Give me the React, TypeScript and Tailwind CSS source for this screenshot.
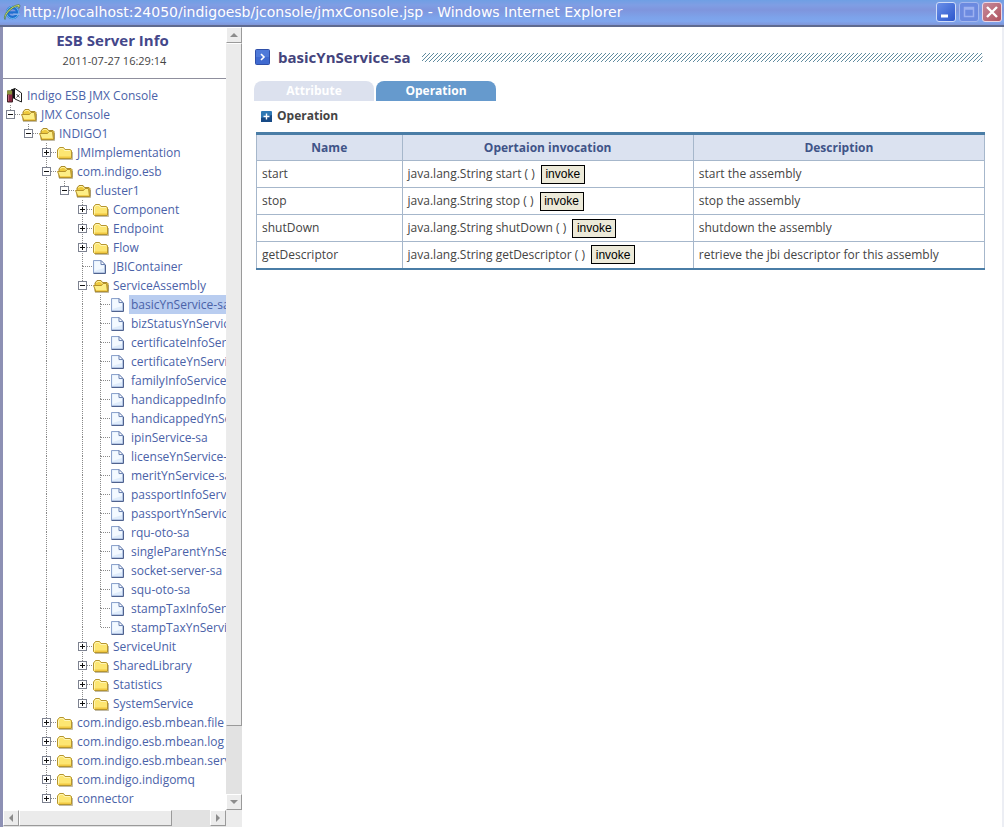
// App.tsx — Indigo ESB JMX console window: MBean tree on the left, operation table on the right

import type { ReactNode } from 'react';

interface TreeItem {
  label: string;
  kind: 'open' | 'closed' | 'page';
  selected?: boolean;
  children?: TreeItem[];
}

const closed = (label: string): TreeItem => ({ label, kind: 'closed' });
const page = (label: string): TreeItem => ({ label, kind: 'page' });

const TREE: TreeItem = {
  label: 'JMX Console',
  kind: 'open',
  children: [
    {
      label: 'INDIGO1',
      kind: 'open',
      children: [
        closed('JMImplementation'),
        {
          label: 'com.indigo.esb',
          kind: 'open',
          children: [
            {
              label: 'cluster1',
              kind: 'open',
              children: [
                closed('Component'),
                closed('Endpoint'),
                closed('Flow'),
                page('JBIContainer'),
                {
                  label: 'ServiceAssembly',
                  kind: 'open',
                  children: [
                    { label: 'basicYnService-sa', kind: 'page', selected: true },
                    page('bizStatusYnService-sa'),
                    page('certificateInfoService-sa'),
                    page('certificateYnService-sa'),
                    page('familyInfoService-sa'),
                    page('handicappedInfoService-sa'),
                    page('handicappedYnService-sa'),
                    page('ipinService-sa'),
                    page('licenseYnService-sa'),
                    page('meritYnService-sa'),
                    page('passportInfoService-sa'),
                    page('passportYnService-sa'),
                    page('rqu-oto-sa'),
                    page('singleParentYnService-sa'),
                    page('socket-server-sa'),
                    page('squ-oto-sa'),
                    page('stampTaxInfoService-sa'),
                    page('stampTaxYnService-sa'),
                  ],
                },
                closed('ServiceUnit'),
                closed('SharedLibrary'),
                closed('Statistics'),
                closed('SystemService'),
              ],
            },
          ],
        },
        closed('com.indigo.esb.mbean.file'),
        closed('com.indigo.esb.mbean.log'),
        closed('com.indigo.esb.mbean.service'),
        closed('com.indigo.indigomq'),
        closed('connector'),
      ],
    },
  ],
};

const OPERATIONS = [
  { name: 'start', description: 'start the assembly' },
  { name: 'stop', description: 'stop the assembly' },
  { name: 'shutDown', description: 'shutdown the assembly' },
  { name: 'getDescriptor', description: 'retrieve the jbi descriptor for this assembly' },
];

/** One 18px column of the tree: a guide line, a branch, or a branch with its expander box */
function TreeCell({ up, down, branch, box }: { up?: boolean; down?: boolean; branch?: boolean; box?: '+' | '-' }) {
  return (
    <svg width="18" height="19" viewBox="0 0 18 19" className="shrink-0" aria-hidden="true">
      <g stroke="#8a8a8a" strokeDasharray="1 1" shapeRendering="crispEdges">
        {up && <path d="M7.5 0V9" />}
        {down && <path d="M7.5 9V19" />}
        {branch && <path d="M8 9.5H18" />}
      </g>
      {box && (
        <g shapeRendering="crispEdges">
          <rect x="3.5" y="5.5" width="8" height="8" fill="#fff" stroke="#7d8290" />
          <path d={box === '+' ? 'M5 9.5H10M7.5 7V12' : 'M5 9.5H10'} stroke="#111" />
        </g>
      )}
    </svg>
  );
}

function FolderIcon({ open }: { open: boolean }) {
  return (
    <svg width="17" height="16" viewBox="0 0 17 16" className="shrink-0" aria-hidden="true">
      {open ? (
        <>
          <path d="M2 13.5V5L4 2.5H8L9.5 4.5H14L15 5.5V13.5Z" fill="#eec93c" stroke="#a98a2c" />
          <path d="M3.5 5L4.5 3.5H7.5L9 5.5H13.5" fill="none" stroke="#fff3a0" />
          <path d="M0.5 7.5H8.5L10 5.5H13.5L14.5 13.5H3Z" fill="#fdee86" stroke="#b5922c" />
          <path d="M3 12.5H14" stroke="#f3cf4e" />
        </>
      ) : (
        <>
          <path d="M0.5 12.5V5L2.5 2.5H6.5L8 4.5H13L14.5 5.5V13.5H1.5Z" fill="#fde672" stroke="#b5952f" />
          <path d="M1.5 11.5V5.5L3 3.5H6L7.5 5.5H13" fill="none" stroke="#fff6b4" />
          <path d="M2 11.5H14V13H2Z" fill="#f1c842" />
        </>
      )}
      <path d="M2 14.5H15.5V7" fill="none" stroke="#77683a" opacity="0.45" />
    </svg>
  );
}

function PageIcon() {
  return (
    <svg width="17" height="16" viewBox="0 0 17 16" className="shrink-0" aria-hidden="true">
      <path d="M0.5 1.5H8L12 5.5V14H0.5Z" fill="#dfecfb" stroke="#8da3cc" />
      <path d="M1.5 2.5H7.5V6.5H11V9L1.5 12Z" fill="#f3f9ff" />
      <path d="M8 1.5V5.5H12Z" fill="#fff" stroke="#6d83b2" />
      <path d="M0.5 14.5H12.5V6" fill="none" stroke="#4f628e" />
    </svg>
  );
}

function ConsoleIcon() {
  return (
    <svg width="17" height="17" viewBox="0 0 17 17" className="shrink-0" aria-hidden="true">
      <path d="M5 3L9 1.5L15.5 6V15L9 12Z" fill="#fff" stroke="#222" />
      <path d="M5 3L9 1.5V12L6 11Z" fill="#111" />
      <path d="M10.5 7L13.5 10.5M13.5 7.5L10.5 10.5" stroke="#555" />
      <path d="M1.5 4H6.5V15H1.5Z" fill="#8b2942" stroke="#3c2226" />
      <path d="M1 3.5H6V7.5H1Z" fill="#87913c" />
      <path d="M2.5 8V14" stroke="#c0667a" />
    </svg>
  );
}

interface TreeRowsProps {
  item: TreeItem;
  guides: boolean[];
  last: boolean;
}

function TreeRows({ item, guides, last }: TreeRowsProps) {
  const box = item.kind === 'page' ? undefined : item.kind === 'open' ? '-' : '+';
  const children = item.children ?? [];
  return (
    <li>
      <div className="flex h-[19px] items-center">
        {guides.map((on, i) => (
          <TreeCell key={i} up={on} down={on} />
        ))}
        <TreeCell up down={!last} branch box={box} />
        {item.kind === 'page' ? <PageIcon /> : <FolderIcon open={item.kind === 'open'} />}
        <a
          href="#"
          className={`ml-px whitespace-nowrap px-0.5 leading-[19px] ${item.selected ? 'bg-[#b9cdf0]' : ''}`}
        >
          {item.label}
        </a>
      </div>
      {children.length > 0 && (
        <ul>
          {children.map((child, i) => (
            <TreeRows
              key={child.label}
              item={child}
              guides={[...guides, !last]}
              last={i === children.length - 1}
            />
          ))}
        </ul>
      )}
    </li>
  );
}

function ScrollButton({ label, points }: { label: string; points: string }) {
  return (
    <button
      type="button"
      aria-label={label}
      className="flex size-4 shrink-0 items-center justify-center border border-t-white border-l-white border-r-[#9a9a9a] border-b-[#9a9a9a] bg-[#ececec]"
    >
      <svg width="8" height="8" viewBox="0 0 8 8" aria-hidden="true">
        <polygon points={points} fill="#8c8c8c" />
      </svg>
    </button>
  );
}

function VerticalScrollbar() {
  return (
    <div className="flex w-4 shrink-0 flex-col bg-[#e2e2e2]">
      <ScrollButton label="Scroll up" points="0,6 4,2 8,6" />
      <div className="grow-[10] border border-t-white border-l-[#ececec] border-r-[#9a9a9a] border-b-[#9a9a9a] bg-[#ebebeb]" />
      <div className="grow" />
      <ScrollButton label="Scroll down" points="0,2 8,2 4,6" />
    </div>
  );
}

function HorizontalScrollbar() {
  return (
    <div className="flex h-[17px] shrink-0 bg-[#ececec]">
      <div className="flex flex-1 bg-[#e2e2e2]">
        <ScrollButton label="Scroll left" points="6,0 6,8 2,4" />
        <div className="h-4 grow-[4] border border-t-white border-l-white border-r-[#9a9a9a] border-b-[#9a9a9a] bg-[#ebebeb]" />
        <div className="grow" />
        <ScrollButton label="Scroll right" points="2,0 6,4 2,8" />
      </div>
      <div className="w-4" />
    </div>
  );
}

function Sidebar() {
  return (
    <aside className="flex w-[239px] shrink-0 flex-col">
      <div className="flex min-h-0 flex-1">
        <div className="flex min-w-0 flex-1 flex-col overflow-hidden">
          <header className="border-b border-[#8f8f9d] pt-[3px] pr-1 pb-1.5 text-center">
            <h2 className="text-[15px] leading-5 font-bold text-[#44478a]">ESB Server Info</h2>
            <p className="pl-1 text-[11px] leading-[22px] text-[#444]">2011-07-27 16:29:14</p>
          </header>
          <nav aria-label="MBeans" className="min-h-0 flex-1 overflow-hidden pt-[7px] text-[#4a62a8]">
            <a href="#" className="flex h-[19px] items-center gap-1 pl-[3px] whitespace-nowrap">
              <ConsoleIcon />
              Indigo ESB JMX Console
            </a>
            <ul>
              <TreeRows item={TREE} guides={[]} last />
            </ul>
          </nav>
        </div>
        <VerticalScrollbar />
      </div>
      <HorizontalScrollbar />
    </aside>
  );
}

function ExplorerLogo() {
  return (
    <svg width="18" height="18" viewBox="0 0 18 18" className="shrink-0" aria-hidden="true">
      <circle cx="9.5" cy="9.5" r="5" fill="none" stroke="#1f6fd0" strokeWidth="3.4" />
      <circle cx="9.5" cy="9.5" r="6" fill="none" stroke="#7fd0f5" strokeWidth="0.8" />
      <path d="M5 9.5H15" stroke="#1f6fd0" strokeWidth="2.4" />
      <path d="M10.5 12H17V10.5H10Z" fill="#86aee8" />
      <path
        d="M2 16.5C-1 13 7 2.5 16 1.5C17.5 1.8 17 4 15.8 5.5C16 3 14.5 3 12 4C6 7 2.5 12 2 16.5Z"
        fill="#e3ea62"
        stroke="#3f7052"
        strokeWidth="0.7"
      />
    </svg>
  );
}

function WindowButton({ label, className, children }: { label: string; className: string; children: ReactNode }) {
  return (
    <button type="button" aria-label={label} className={`size-5 rounded-[3px] border ${className}`}>
      <svg width="18" height="18" viewBox="0 0 18 18" fill="none" aria-hidden="true">
        {children}
      </svg>
    </button>
  );
}

function TitleBar() {
  return (
    <header className="flex h-[27px] shrink-0 items-center border-b-2 border-[#5f6b90] bg-[linear-gradient(#6f9fe4,#7f9ee4_20%,#7f95dd_40%,#7da3ea_70%,#7fa6ee_85%,#8096d8)] pr-0.5 pb-0.5 pl-[3px]">
      <ExplorerLogo />
      <h1 className="ml-0.5 flex-1 truncate font-['DejaVu_Sans'] text-[14px] leading-5 text-white">
        http://localhost:24050/indigoesb/jconsole/jmxConsole.jsp - Windows Internet Explorer
      </h1>
      <div className="flex gap-[3px]">
        <WindowButton label="Minimize" className="border-[#cfdcf8] bg-linear-to-br from-[#6b8fe8] to-[#2c56cc]">
          <path d="M4 13H11" stroke="#fff" strokeWidth="3" />
        </WindowButton>
        <WindowButton label="Maximize" className="border-[#a4b8ee] bg-[#6c8ae0]">
          <path d="M4.5 4.5H13.5V13.5H4.5ZM4 6H14" stroke="#9db1f0" strokeWidth="1.5" />
        </WindowButton>
        <WindowButton label="Close" className="border-[#ecd6e4] bg-linear-to-br from-[#c58a9c] to-[#b0525f]">
          <path d="M4 4L14 14M14 4L4 14" stroke="#fff" strokeWidth="2.4" />
        </WindowButton>
      </div>
    </header>
  );
}

function Hatching() {
  return (
    <svg className="mr-0.5 h-[9px] min-w-0 flex-1" aria-hidden="true">
      <defs>
        <pattern id="hatch" width="4" height="4" patternUnits="userSpaceOnUse">
          <path d="M-1 1L1 -1M0 4L4 0M3 5L5 3" stroke="#4f7f94" strokeWidth="0.9" />
        </pattern>
      </defs>
      <rect width="100%" height="9" fill="url(#hatch)" />
    </svg>
  );
}

function OperationTable() {
  return (
    <div className="pl-0.5">
      <table className="w-full border-collapse border-t-3 border-b-2 border-t-[#4a7da6] border-b-[#4a7da6] text-[#444]">
        <thead className="bg-[#dbe2f0] text-[#3f5488]">
          <tr className="h-[27px]">
            <th className="w-1/5 border border-t-0 border-[#a6b7cb] font-bold">Name</th>
            <th className="w-2/5 border border-t-0 border-[#a6b7cb] font-bold">Opertaion invocation</th>
            <th className="w-2/5 border border-t-0 border-[#a6b7cb] font-bold">Description</th>
          </tr>
        </thead>
        <tbody>
          {OPERATIONS.map((op) => (
            <tr key={op.name} className="h-[27px]">
              <td className="border border-b-0 border-[#a6b7cb] px-[5px]">{op.name}</td>
              <td className="border border-b-0 border-[#a6b7cb] px-[5px]">
                <div className="flex items-center gap-1.5">
                  <span>java.lang.String {op.name} ( )</span>
                  <button
                    type="button"
                    className="h-[19px] w-11 border border-black bg-[#ece9d8] font-['Liberation_Sans'] leading-4 text-black"
                  >
                    invoke
                  </button>
                </div>
              </td>
              <td className="border border-b-0 border-[#a6b7cb] px-[5px]">{op.description}</td>
            </tr>
          ))}
        </tbody>
      </table>
    </div>
  );
}

function MainPanel() {
  return (
    <main className="min-w-0 flex-1 pt-5 pr-[17px] pl-3">
      <div className="flex items-center gap-2 pl-px">
        <svg width="15" height="16" viewBox="0 0 15 16" className="shrink-0" aria-hidden="true">
          <rect x="0.5" y="0.5" width="14" height="15" rx="1" fill="#3f6ad0" stroke="#2f4fa8" />
          <path d="M1 1H14V8H1Z" fill="#5a86e0" opacity="0.6" />
          <path d="M6 5L9 8L6 11" fill="none" stroke="#fff" strokeWidth="1.6" />
        </svg>
        <h2 className="mr-1 text-[15px] leading-5 font-bold text-[#44447c]">basicYnService-sa</h2>
        <Hatching />
      </div>

      <div role="tablist" className="mt-3.5 flex gap-0.5 font-bold text-white">
        <button
          type="button"
          role="tab"
          aria-selected="false"
          className="h-5 w-[120px] rounded-t-lg bg-[#dce1ee] leading-[18px]"
        >
          Attribute
        </button>
        <button
          type="button"
          role="tab"
          aria-selected="true"
          className="h-5 w-[120px] rounded-t-lg bg-[#669acd] leading-[18px]"
        >
          Operation
        </button>
      </div>

      <div className="mt-1.5 mb-[7px] flex items-center gap-[5px] pl-[7px]">
        <svg width="11" height="11" viewBox="0 0 11 11" className="shrink-0" aria-hidden="true">
          <rect width="11" height="11" rx="1" fill="#2f78b4" />
          <path d="M0 11V7L11 4V11Z" fill="#174a86" />
          <path d="M5.5 2.5V8.5M2.5 5.5H8.5" stroke="#fff" strokeWidth="1.4" />
        </svg>
        <h3 className="leading-[18px] font-bold text-[#444]">Operation</h3>
      </div>

      <OperationTable />
    </main>
  );
}

export default function App() {
  return (
    <div className="flex h-screen flex-col bg-white font-['Open_Sans',sans-serif] text-[12px]">
      <TitleBar />
      <div className="flex min-h-0 flex-1 border-r-2 border-l-3 border-r-[#eceef4] border-l-[#8d90b4]">
        <Sidebar />
        <MainPanel />
      </div>
    </div>
  );
}
